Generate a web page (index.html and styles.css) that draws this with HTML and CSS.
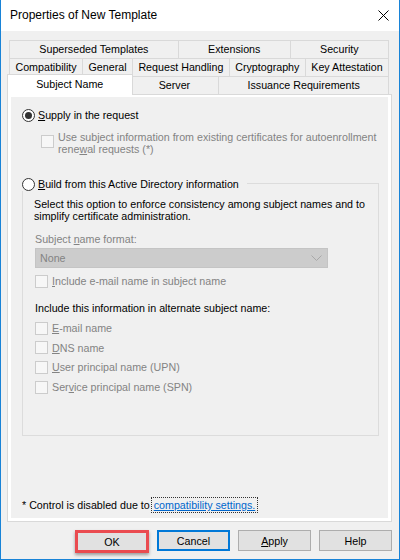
FILE: index.html
```html
<!DOCTYPE html>
<html>
<head>
<meta charset="utf-8">
<link rel="stylesheet" href="styles.css">
</head>
<body>
<div class="window">
  <div class="titlebar">
    <span class="title">Properties of New Template</span>
    <svg class="close" width="11" height="11" viewBox="0 0 11 11"><path d="M0.5 0.5L10.5 10.5M10.5 0.5L0.5 10.5" stroke="#000" stroke-width="1" fill="none"/></svg>
  </div>
  <div class="tabs">
    <div class="tabrow">
      <div class="tab">Superseded Templates</div>
      <div class="tab">Extensions</div>
      <div class="tab">Security</div>
    </div>
    <div class="tabrow">
      <div class="tab">Compatibility</div>
      <div class="tab">General</div>
      <div class="tab">Request Handling</div>
      <div class="tab">Cryptography</div>
      <div class="tab">Key Attestation</div>
    </div>
    <div class="tabrow">
      <div class="tab selected">Subject Name</div>
      <div class="tab">Server</div>
      <div class="tab">Issuance Requirements</div>
    </div>
  </div>
  <div class="panel">
    <div class="page">
      <div class="opt">
        <span class="radio checked"></span>
        <span class="label"><u>S</u>upply in the request</span>
      </div>
      <div class="sub">
        <span class="check"></span>
        <span class="multiline disabled">Use subject information from existing certificates for autoenrollment<br>rene<u>w</u>al requests (*)</span>
      </div>
      <div class="group">
        <div class="opt legend">
          <span class="radio"></span>
          <span class="label"><u>B</u>uild from this Active Directory information</span>
        </div>
        <div class="desc">Select this option to enforce consistency among subject names and to<br>simplify certificate administration.</div>
        <div class="fieldlabel disabled">Subject <u>n</u>ame format:</div>
        <div class="select">
          <span>None</span>
          <svg width="11" height="6" viewBox="0 0 11 6"><path d="M0.5 0.5L5.5 5.5L10.5 0.5" stroke="#a8a8a8" fill="none"/></svg>
        </div>
        <div class="cbrow first">
          <span class="check"></span>
          <span class="disabled"><u>I</u>nclude e-mail name in subject name</span>
        </div>
        <div class="altlabel">Include this information in alternate subject name:</div>
        <div class="cblist">
          <div class="cbrow"><span class="check"></span><span class="disabled"><u>E</u>-mail name</span></div>
          <div class="cbrow"><span class="check"></span><span class="disabled"><u>D</u>NS name</span></div>
          <div class="cbrow"><span class="check"></span><span class="disabled"><u>U</u>ser principal name (UPN)</span></div>
          <div class="cbrow"><span class="check"></span><span class="disabled">Ser<u>v</u>ice principal name (SPN)</span></div>
        </div>
      </div>
      <div class="footnote">* Control is disabled due to <span class="link">compatibility settings.</span></div>
    </div>
  </div>
  <div class="buttons">
    <div class="btn ok">OK</div>
    <div class="btn default">Cancel</div>
    <div class="btn"><u>A</u>pply</div>
    <div class="btn">Help</div>
  </div>
</div>
</body>
</html>
```
FILE: styles.css
```css
html, body {
  margin: 0;
  padding: 0;
}
body {
  width: 400px;
  height: 560px;
  font-family: "Liberation Sans", Arial, sans-serif;
  font-size: 10.7px;
  color: #000;
  overflow: hidden;
}
.window {
  box-sizing: border-box;
  width: 400px;
  height: 560px;
  border: 1px solid #1883d7;
  border-top: none;
  background: #f0f0f0;
  display: flex;
  flex-direction: column;
}
.titlebar {
  flex: none;
  height: 31px;
  background: #fff;
  display: flex;
  align-items: center;
  justify-content: space-between;
  padding: 0 10px 0 9px;
}
.title {
  font-size: 12px;
  margin-top: -1px;
}
.close {
  display: block;
  margin-top: -1px;
}
.tabs {
  flex: none;
  margin: 9px 10px 0 8px;
}
.tabrow {
  display: flex;
  height: 18px;
}
.tab {
  box-sizing: border-box;
  flex: 1 1 auto;
  height: 18px;
  line-height: 17px;
  padding: 0 4px;
  border: 1px solid #d9d9d9;
  border-bottom: none;
  background: #f0f0f0;
  text-align: center;
  white-space: nowrap;
}
.tab + .tab {
  margin-left: -1px;
}
.tab.selected {
  height: 21px;
  margin: -2px -2px 0 -2px;
  line-height: 18px;
  background: #fff;
  border-color: #d9d9d9;
  z-index: 2;
  position: relative;
}
.tab.selected + .tab {
  margin-left: -1px;
}
.panel {
  flex: 1;
  display: flex;
  margin: 0 7px 0 6px;
  border: 1px solid #d9d9d9;
  background: #fff;
  padding: 2px 3px 3px 3px;
}
.page {
  flex: 1;
  background: #f0f0f0;
  padding: 11px 0 0 11px;
}
.opt {
  display: flex;
  align-items: center;
  height: 14px;
}
.radio {
  box-sizing: border-box;
  width: 13px;
  height: 13px;
  border: 1px solid #333;
  border-radius: 50%;
  background: #fff;
  margin-right: 3px;
  display: flex;
  align-items: center;
  justify-content: center;
}
.radio.checked::after {
  content: "";
  width: 7px;
  height: 7px;
  border-radius: 50%;
  background: #333;
}
.sub {
  display: flex;
  align-items: flex-start;
  margin: 9px 0 0 19px;
}
.check {
  box-sizing: border-box;
  flex: none;
  width: 13px;
  height: 13px;
  border: 1px solid #cccccc;
  background: #f7f7f7;
  margin-right: 4px;
}
.sub .check {
  margin-top: 4px;
}
.multiline {
  line-height: 12px;
  white-space: nowrap;
}
.disabled {
  color: #838383;
}
.group {
  margin: 28px 9px 0 0;
  border: 1px solid #dcdcdc;
  padding: 0 0 41px 0;
}
.legend {
  width: fit-content;
  margin: -7px 0 0 -1px;
  padding-right: 8px;
  background: #f0f0f0;
}
.desc {
  margin: 7px 0 0 11px;
  line-height: 12px;
  white-space: nowrap;
}
.fieldlabel {
  margin: 11px 0 0 12px;
  line-height: 12px;
}
.select {
  box-sizing: border-box;
  width: 293px;
  height: 20px;
  margin: 3px 0 0 12px;
  background: #cccccc;
  border: 1px solid #c4c4c4;
  color: #838383;
  display: flex;
  align-items: center;
  justify-content: space-between;
  padding: 0 5px 0 4px;
}
.select svg {
  display: block;
}
.cbrow {
  display: flex;
  align-items: center;
  height: 14px;
  margin-left: 12px;
}
.cbrow.first {
  margin-top: 6px;
}
.altlabel {
  margin: 14px 0 0 12px;
  line-height: 12px;
}
.cblist {
  display: flex;
  flex-direction: column;
  gap: 5.7px;
  margin-top: 7px;
}
.cblist .cbrow {
  margin-left: 12px;
}
.footnote {
  margin: 63px 0 0 0;
  line-height: 12px;
}
.link {
  color: #0066cc;
  text-decoration: underline;
  outline: 1px dotted #333;
  outline-offset: 1px;
  padding: 0 1px;
}
.buttons {
  flex: none;
  display: flex;
  justify-content: flex-end;
  align-items: flex-start;
  gap: 8px;
  height: 21px;
  margin: 8px 7px 8px 0;
}
.btn {
  box-sizing: border-box;
  width: 73px;
  height: 21px;
  background: #e1e1e1;
  border: 1px solid #adadad;
  display: flex;
  align-items: center;
  justify-content: center;
}
.btn.default {
  border: 2px solid #0078d7;
}
.btn.ok {
  width: 74px;
  height: 23px;
  border: 3px solid #ea4b50;
  box-shadow: 0 2px 3px rgba(0, 0, 0, 0.35);
}
```
